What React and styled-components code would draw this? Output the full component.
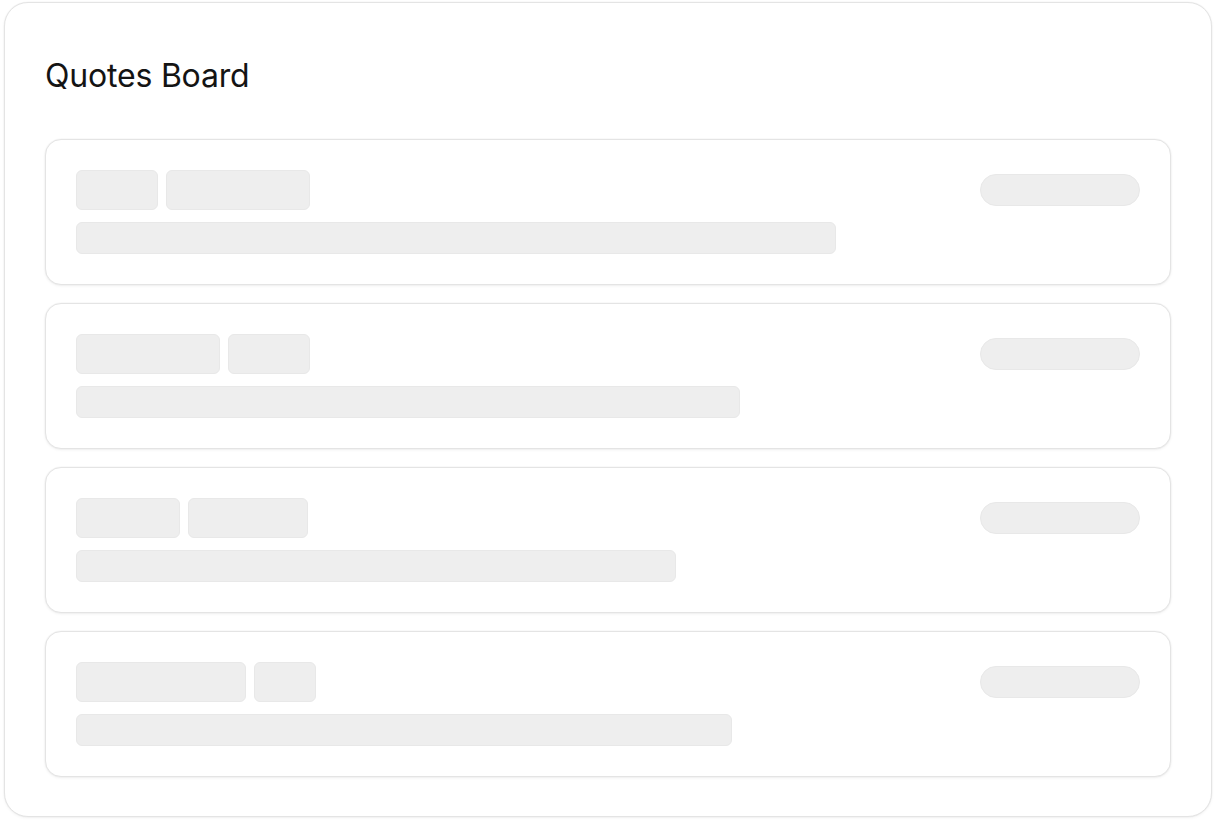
import React from 'react';
import styled, { createGlobalStyle } from 'styled-components';

const GlobalStyle = createGlobalStyle`
  * { box-sizing: border-box; }
  body {
    margin: 0;
    background: #ffffff;
    font-family: Inter, "Noto Sans", "Liberation Sans", sans-serif;
  }
`;

const Page = styled.div`
  padding: 2px 4px 7px;
`;

const Board = styled.section`
  border: 1px solid #e4e4e4;
  border-radius: 24px;
  padding: 40px 40px 39px;
  background: #ffffff;
  box-shadow: 0 0 0 0.5px rgba(0, 0, 0, 0.03), 0 1px 3px rgba(0, 0, 0, 0.05);
`;

const Title = styled.h1`
  margin: 14px 0 44px;
  font-size: 32px;
  line-height: 38px;
  font-weight: 400;
  color: #141414;
  letter-spacing: -0.2px;
`;

const List = styled.div`
  display: flex;
  flex-direction: column;
  gap: 18px;
`;

const Card = styled.div`
  display: flex;
  justify-content: space-between;
  align-items: flex-start;
  padding: 30px;
  border: 1px solid #e4e4e4;
  border-radius: 16px;
  background: #ffffff;
  box-shadow: 0 0 0 0.5px rgba(0, 0, 0, 0.03), 0 1px 3px rgba(0, 0, 0, 0.06);
`;

const Left = styled.div`
  display: flex;
  flex-direction: column;
  gap: 12px;
`;

const Tags = styled.div`
  display: flex;
  gap: 8px;
`;

const Block = styled.div`
  background: #eeeeee;
  border: 1px solid #e8e8e8;
  border-radius: 6px;
  height: ${({ h }) => h}px;
  width: ${({ w }) => w}px;
`;

const Pill = styled.div`
  margin-top: 4px;
  width: 160px;
  height: 32px;
  border-radius: 16px;
  background: #eeeeee;
  border: 1px solid #e8e8e8;
`;

const rows = [
  { tags: [82, 144], line: 760 },
  { tags: [144, 82], line: 664 },
  { tags: [104, 120], line: 600 },
  { tags: [170, 62], line: 656 },
];

const App = () => {
  return (
    <Page>
      <GlobalStyle />
      <Board>
        <Title>Quotes Board</Title>
        <List>
          {rows.map((row, i) => (
            <Card key={i}>
              <Left>
                <Tags>
                  {row.tags.map((w, j) => (
                    <Block key={j} w={w} h={40} />
                  ))}
                </Tags>
                <Block w={row.line} h={32} />
              </Left>
              <Pill />
            </Card>
          ))}
        </List>
      </Board>
    </Page>
  );
};

export default App;
